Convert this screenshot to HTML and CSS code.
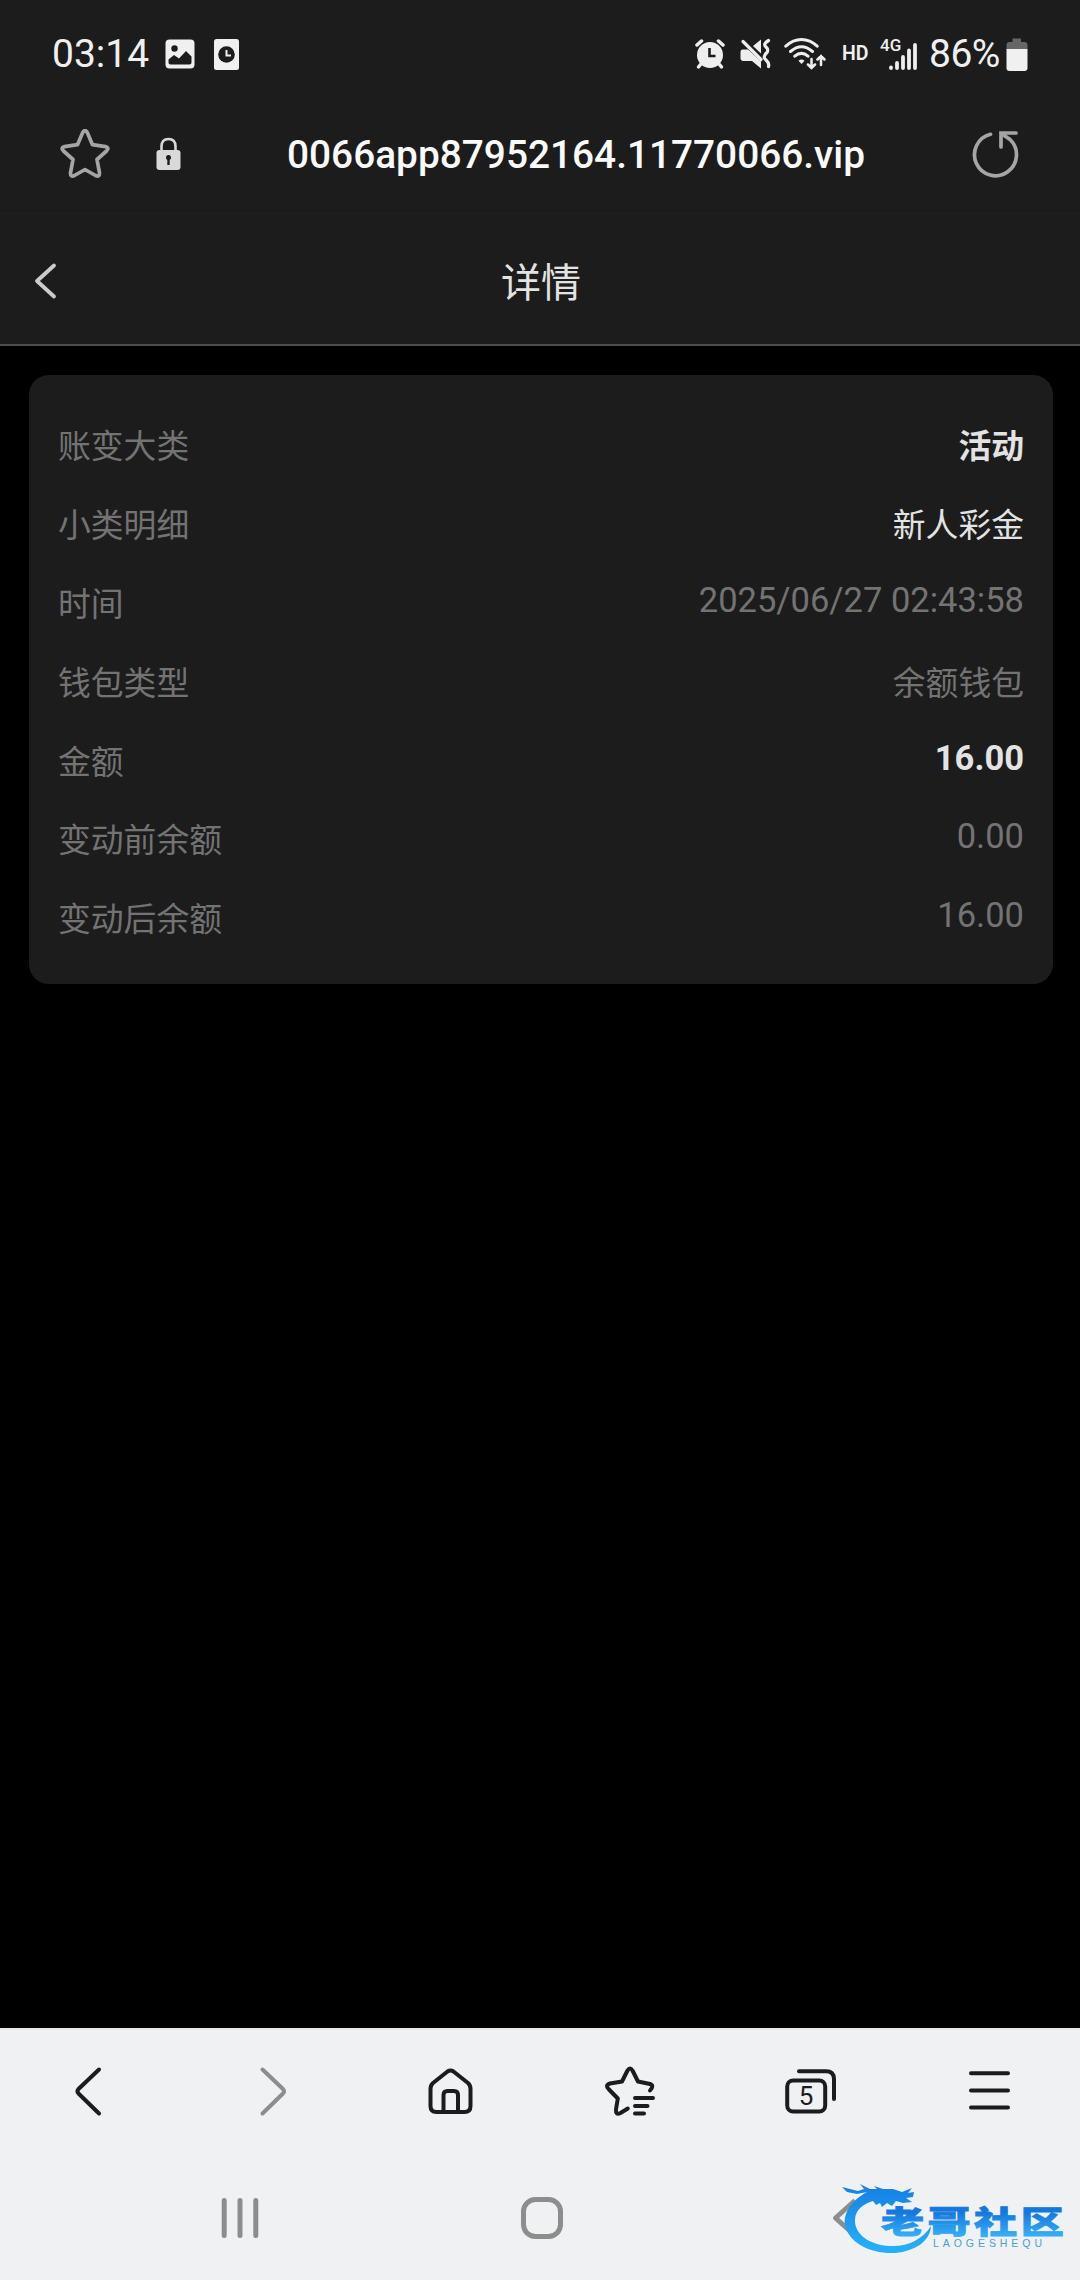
FILE: index.html
```
<!DOCTYPE html>
<html lang="zh-CN">
<head>
<meta charset="utf-8">
<title>详情</title>
<link rel="stylesheet" href="styles.css">
</head>
<body>
<div class="screen">
  <header class="status">
    <span class="clock">03:14</span>
    <svg class="picture" width="30" height="30" viewBox="0 0 30 30"><rect x="0.5" y="0.5" width="29" height="29" rx="4" fill="#f0f0f0"/><circle cx="9.5" cy="9.5" r="3.2" fill="#1c1c1c"/><path d="M3.500 20.500 9 16 14 19.500 21 12 26.500 17.500V23.500Q26.500 25.500 24.500 25.500H5.500Q3.500 25.500 3.500 23.500Z" fill="#1c1c1c"/></svg>
    <svg class="doc" width="25" height="31" viewBox="0 0 25 31"><rect width="25" height="31" rx="2.500" fill="#f0f0f0"/><circle cx="12.500" cy="15.500" r="8.300" fill="#1c1c1c"/><path d="M12.500 11V16.500H17" fill="none" stroke="#f0f0f0" stroke-width="2"/></svg>
    <div class="indicators">
      <svg class="alarm" width="30" height="32" viewBox="0 0 30 32" fill="none" stroke="#eee" stroke-linecap="round"><circle cx="15" cy="17" r="13" fill="#eee" stroke="none"/><path d="M2 7 6.500 3M28 7 23.500 3" stroke-width="3.500"/><path d="M5.500 26.500 3.500 29M24.500 26.500 26.500 29" stroke-width="3.500"/><path d="M14.500 10V18H20.500" stroke="#1c1c1c" stroke-width="2.600" stroke-linecap="butt"/></svg>
      <svg class="mute" width="31" height="32" viewBox="0 0 31 32"><path d="M2.500 11.500H8L21 23.500V30.500L12 23H3.500Q0.500 23 0.500 20V14.500Q0.500 11.500 2.500 11.500ZM13 8 21 1.500V15.500Z" fill="#eee"/><path d="M3 3.500 21 21.500" stroke="#eee" stroke-width="3.200" stroke-linecap="round"/><path d="M28.500 2.500Q22.500 6 26 9T26 15.500T26 22T28.500 28.500" fill="none" stroke="#eee" stroke-width="3.200" stroke-linecap="round"/></svg>
      <svg class="wifi" width="42" height="32" viewBox="0 0 42 32" fill="none" stroke="#eee" stroke-width="3" stroke-linecap="round"><path d="M1.800 8.200Q9 1.500 17.500 1.500T33.200 8.200M6.500 13.500Q17.500 4 28.500 13.500M10.800 18.200Q17.500 12.500 24 18.200"/><path d="M14.500 22.800 17.500 26 20.500 22.800Q17.500 20.300 14.500 22.800Z" fill="#eee" stroke="none"/><path d="M27.500 21V30M24 26.500 27.500 30 31 26.500M37 27V18M33.500 21.500 37 18 40.500 21.500" stroke-width="2.500"/></svg>
      <span class="hd">HD</span>
      <div class="network"><span class="gen">4G</span><svg width="28" height="28" viewBox="0 0 28 28" stroke="#eee" stroke-width="3.800" stroke-linecap="round"><path d="M2 25.500V26M8 21V26M14 15V26M20 8.500V26M26 3V26"/></svg></div>
      <span class="percent">86%</span>
      <svg class="battery" width="22" height="33" viewBox="0 0 22 33"><path d="M6.500 0.500H15V4H18.500Q21.500 4 21.500 7V11H0.500V7Q0.500 4 3.500 4H6.500Z" fill="#666"/><path d="M0.500 11H21.500V30Q21.500 33 18.500 33H3.500Q0.500 33 0.500 30Z" fill="#f0f0f0"/></svg>
    </div>
  </header>

  <div class="address">
    <svg class="star" width="50" height="50" viewBox="0 0 50 50"><path d="M22.700 3.500Q25 -0.500 27.300 3.500L32.500 15.700 45.500 17.600Q49.800 18.800 46.500 22L37 30.500 39.500 43.800Q39.800 48.500 35.500 46.500L25 40.500 14.500 46.500Q10.200 48.500 10.500 43.800L13 30.500 3.500 22Q0.200 18.800 4.500 17.600L17.500 15.700Z" fill="none" stroke="#a5a5a5" stroke-width="3.700" stroke-linejoin="round"/></svg>
    <svg class="lock" width="25" height="34" viewBox="0 0 25 34"><path d="M5.500 14V9.500Q5.500 2 12.500 2T19.500 9.500V14" fill="none" stroke="#d9d9d9" stroke-width="2.600"/><rect x="0.500" y="13" width="24" height="20" rx="3" fill="#d9d9d9"/><circle cx="12.500" cy="20.500" r="2.500" fill="#1c1c1c"/><path d="M12.500 21V28" stroke="#1c1c1c" stroke-width="2.400"/></svg>
    <span class="url">0066app87952164.11770066.vip</span>
    <svg class="reload" width="48" height="48" viewBox="0 0 48 48" fill="none" stroke="#a5a5a5" stroke-width="3.700" stroke-linecap="round"><path d="M19.500 4.300A21 21 0 1 0 39 9.500L31 4"/><path d="M45 3H30V17" stroke-linejoin="miter"/></svg>
  </div>

  <div class="titlebar">
    <svg class="back" width="24" height="38" viewBox="0 0 24 38"><path d="M21 3.500 4 19 21 34.500" fill="none" stroke="#ccc" stroke-width="3.800" stroke-linecap="round" stroke-linejoin="round"/></svg>
    <h1>详情</h1>
  </div>

  <main class="content">
    <dl class="card">
      <div class="row"><dt>账变大类</dt><dd class="strong">活动</dd></div>
      <div class="row"><dt>小类明细</dt><dd class="bright">新人彩金</dd></div>
      <div class="row"><dt>时间</dt><dd class="num">2025/06/27 02:43:58</dd></div>
      <div class="row"><dt>钱包类型</dt><dd>余额钱包</dd></div>
      <div class="row"><dt>金额</dt><dd class="num strong">16.00</dd></div>
      <div class="row"><dt>变动前余额</dt><dd class="num">0.00</dd></div>
      <div class="row"><dt>变动后余额</dt><dd class="num">16.00</dd></div>
    </dl>
  </main>

  <nav class="toolbar">
    <svg viewBox="0 0 60 60"><path d="M39 8.500 18.500 28Q16.500 30.300 18.500 32.500L39 52.500"/></svg>
    <svg class="disabled" viewBox="0 0 60 60"><path d="M22.500 8.500 43 28Q45 30.300 43 32.500L22.500 52.500"/></svg>
    <svg viewBox="0 0 60 60"><path d="M27.500 10.500Q30.500 8.500 33.500 10.500L48 22Q50.500 24.200 50.500 28V45Q50.500 51 44.500 51H16.500Q10.500 51 10.500 45V28Q10.500 24.200 13 22ZM23.500 51V34Q23.500 30 27.500 30H34Q38 30 38 34V51"/></svg>
    <svg viewBox="0 0 60 60"><path d="M27.800 47.500 20.500 52Q15.500 54.500 16 48.500L17.800 37.500 9 28.500Q4.500 24.500 10 22.500L22 20.500 27.500 9.500Q30 5.500 32.500 9.500L38 20.500 50 23Q54.500 24.500 50 29.500M35 37H53M35 45H47.500M35 52.500H44"/></svg>
    <svg viewBox="0 0 60 60"><rect x="7.200" y="19.500" width="38" height="31" rx="6"/><path d="M19 10.200H46Q54 10.200 54 18V38"/><text x="26" y="44" text-anchor="middle">5</text></svg>
    <svg viewBox="0 0 60 60"><path d="M11 12.300H48M11 29.400H48M11 46.500H48"/></svg>
  </nav>

  <footer class="system">
    <svg viewBox="0 0 60 60"><path d="M14.200 12.500V47.500M30 12.500V47.500M45.800 12.500V47.500"/></svg>
    <svg viewBox="0 0 60 60"><rect x="13.500" y="11.500" width="37" height="37" rx="12"/></svg>
    <svg viewBox="0 0 60 60"><path d="M45 12.500 25.500 30 45 47.500" stroke-linecap="butt"/></svg>
    <svg class="brand" width="230" height="80" viewBox="0 0 230 80">
      <defs>
        <linearGradient id="dragon" x1="0" y1="0" x2="0" y2="1"><stop offset="0.100" stop-color="#1684e6"/><stop offset="0.900" stop-color="#25adf5"/></linearGradient>
        <linearGradient id="word" x1="0" y1="0" x2="0" y2="1"><stop offset="0.350" stop-color="#1478df"/><stop offset="0.850" stop-color="#34adf7"/></linearGradient>
      </defs>
      <path d="M27 12C12 20 3 33 5 45C9 63 30 74 55 73C76 71 90 61 91 46C82 60 67 67 50 66C29 65 14 54 15 39C16 29 23 24 33 21L36 25 40 23 42 27 47 23 52 26 56 21 63 23 72 22 66 18 73 17 74 12 68 13 72 8 62 12 53 9 43 9 34 6 37 9 30 9 20 4 24 9 18 11 2 7 7 12 17 14Z" fill="url(#dragon)"/>
      <text class="brand-name" transform="scale(1.390 1)" x="29.500" y="53" fill="url(#word)" stroke="url(#word)">老哥社区</text>
      <text class="brand-latin" x="93" y="66.500" textLength="109">LAOGESHEQU</text>
    </svg>
  </footer>
</div>
</body>
</html>
```
FILE: styles.css
```
* { box-sizing: border-box; }
body {
  margin: 0;
  background: #000;
  font-family: Roboto, "Noto Sans CJK SC", sans-serif;
}
svg { display: block; flex: none; }
.screen {
  width: 1080px;
  height: 2280px;
  display: flex;
  flex-direction: column;
}

.status {
  height: 108px;
  padding: 0 52px;
  display: flex;
  align-items: center;
  background: #1c1c1c;
  color: #f0f0f0;
}
.clock, .percent { font-size: 39px; line-height: 46px; }
.clock { width: 113px; }
.doc { margin-left: 19px; }
.indicators { margin-left: auto; display: flex; align-items: center; }
.mute { margin-left: 15px; }
.wifi { margin-left: 13px; }
.hd { width: 27px; margin-left: 16px; font-size: 19.500px; font-weight: 600; line-height: 24px; }
.network {
  width: 37px;
  height: 32px;
  margin-left: 11px;
  display: grid;
  justify-items: end;
  align-items: end;
}
.network > * { grid-area: 1 / 1; }
.gen { justify-self: start; align-self: start; font-size: 17px; font-weight: 500; line-height: 15px; }
.percent { width: 77px; margin-left: 12px; letter-spacing: -0.500px; }

.address {
  height: 106px;
  padding: 0 61px 14px 60px;
  display: flex;
  align-items: center;
  background: #1c1c1c;
  border-bottom: 1px solid #202020;
}
.lock { margin-left: 46px; }
.url { margin: 2px 0 0 106px; color: #fafafa; font-size: 38.800px; font-weight: 500; line-height: 46px; }
.reload { margin-left: auto; }

.titlebar {
  height: 132px;
  padding: 3px 33px 0;
  display: grid;
  grid-template-columns: 24px 1fr 24px;
  align-items: center;
  background: #1c1c1c;
  border-bottom: 2px solid #4e4e4e;
}
.titlebar h1 {
  margin: 7px 0 0 2px;
  color: #e3e3e3;
  font-size: 40px;
  font-weight: 400;
  line-height: 48px;
  text-align: center;
}

.content { flex: 1; padding: 29px 27px 0 29px; }
.card {
  height: 609px;
  margin: 0;
  padding: 32px 29px 0;
  border-radius: 20px;
  background: #1c1c1c;
}
.row {
  height: 78.800px;
  display: flex;
  align-items: center;
  justify-content: space-between;
  color: #737373;
  font-size: 32.800px;
  line-height: 48px;
}
.row dt, .row dd { margin: 0; padding-top: 2px; }
.row .num { padding: 0 0 8px; font-size: 34.500px; }
.row .strong { color: #e3e3e3; font-weight: 700; }
.row .bright { color: #e3e3e3; }

.toolbar {
  height: 126px;
  padding-bottom: 2px;
  display: grid;
  grid-template-columns: repeat(6, 1fr);
  place-items: center;
  background: #eff1f3;
  border-top: 2px solid #e7e7e7;
}
.toolbar svg, .system svg:not(.brand) {
  width: 60px;
  height: 60px;
  fill: none;
  stroke: #1b1c1e;
  stroke-width: 4px;
  stroke-linecap: round;
  stroke-linejoin: round;
}
.toolbar .disabled { stroke: #8c8d8e; }
.toolbar text { fill: #1b1c1e; stroke: none; font-size: 26px; }

.system {
  position: relative;
  height: 126px;
  padding: 2px 90px 0;
  display: grid;
  grid-template-columns: repeat(3, 1fr);
  justify-items: center;
  align-items: center;
  background: #eff1f3;
}
.system svg:not(.brand) { stroke: #8c8d8d; stroke-width: 5px; }
.brand { position: absolute; left: 840px; top: 26px; }
.brand-name { font-family: "Noto Sans CJK SC", sans-serif; font-size: 31px; font-weight: 900; letter-spacing: 2.500px; stroke-width: 0.800px; }
.brand-latin { fill: #4c9fd8; font-family: "Liberation Sans", sans-serif; font-size: 10.500px; }
```
